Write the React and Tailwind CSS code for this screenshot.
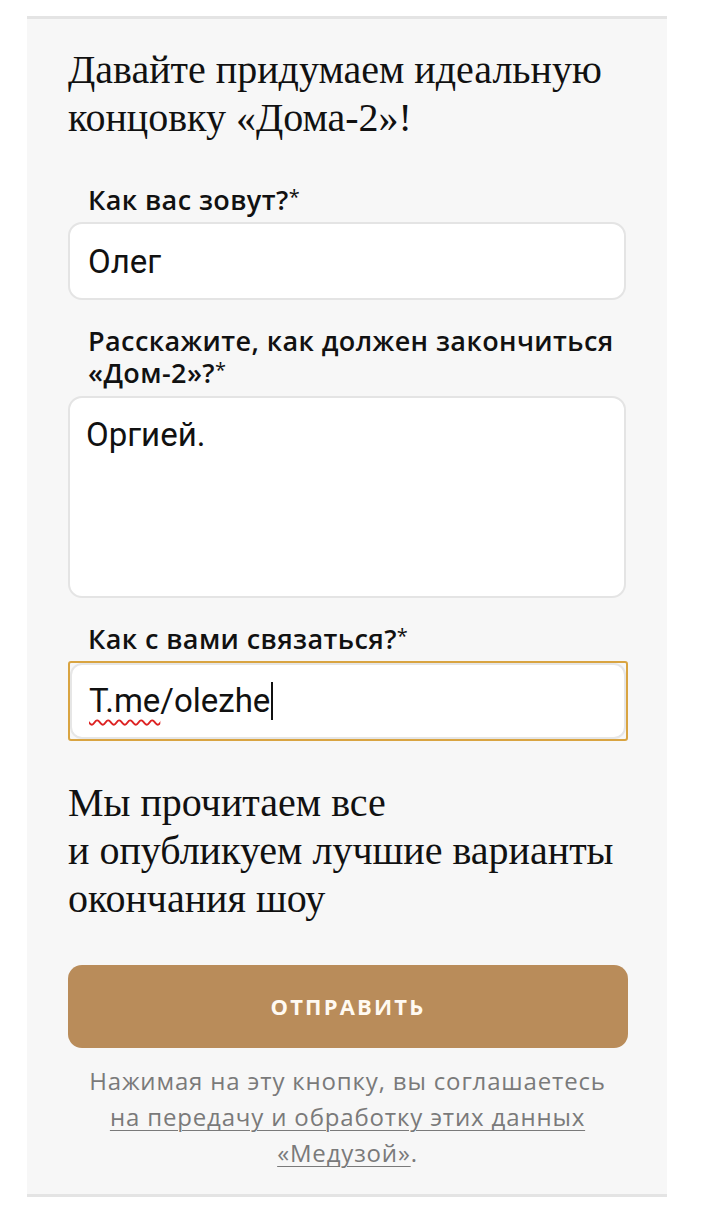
import { useState } from 'react';

const serif = { fontFamily: '"Liberation Serif", serif' };
const sans = { fontFamily: '"Open Sans", sans-serif' };

function Label({ children }) {
  return (
    <div className="pl-5 text-[27px] leading-[32px] font-semibold tracking-[0.015em] text-[#111]" style={sans}>
      {children}
      <span className="font-normal text-[20px] leading-[0] align-[6px]">*</span>
    </div>
  );
}

export default function App() {
  const [name, setName] = useState('Олег');
  const [ending, setEnding] = useState('Оргией.');

  return (
    <div className="bg-white min-h-[1205px] pt-[16px] pl-[27px] w-[704px]">
      <div className="w-[640px] bg-[#f7f7f7] border-t-[3px] border-b-[3px] border-[#e4e4e4] pl-[41px] pr-[40px] pt-[27px] pb-[23px]">
        <h1 className="text-[40px] leading-[48px] text-[#111]" style={serif}>
          Давайте придумаем идеальную концовку «Дома-2»!
        </h1>

        <div className="mt-[42px]" style={{ fontFamily: 'Roboto, sans-serif' }}>
          <Label>Как вас зовут?</Label>
          <input
            value={name}
            onChange={(e) => setName(e.target.value)}
            className="mt-[6px] block w-[558px] h-[78px] bg-white border-2 border-[#e4e4e4] rounded-[14px] px-[18px] text-[33px] text-[#111] outline-none"
          />

          <div className="mt-[25px]">
            <Label>Расскажите, как должен закончиться «Дом-2»?</Label>
          </div>
          <textarea
            value={ending}
            onChange={(e) => setEnding(e.target.value)}
            className="mt-[7px] block w-[558px] h-[202px] bg-white border-2 border-[#e4e4e4] rounded-[14px] px-[16px] pt-[12px] text-[33px] text-[#111] outline-none resize-none"
          />

          <div className="mt-[25px]">
            <Label>Как с вами связаться?</Label>
          </div>
          <div className="mt-[6px] w-[560px] h-[80px] border-2 border-[#d9a441] rounded-[3px]">
            <div className="h-full bg-white border-2 border-[#e6e6e6] rounded-[12px] px-[17px] flex items-center text-[33px] text-[#111]">
              <span className="underline decoration-wavy decoration-[#d22] decoration-[1.5px] underline-offset-[7px]">T.me</span>
              <span>/olezhe</span>
              <span className="w-[2px] h-[38px] bg-[#111] ml-[1px]" />
            </div>
          </div>
        </div>

        <p className="mt-[38px] text-[40px] leading-[48px] text-[#111]" style={serif}>
          Мы прочитаем все
          <br />
          и опубликуем лучшие варианты
          <br />
          окончания шоу
        </p>

        <button className="mt-[42px] block w-[560px] h-[83px] bg-[#b98c5a] rounded-[14px] text-[#fffaf2] text-[22px] font-bold tracking-[0.1em]" style={sans}>
          ОТПРАВИТЬ
        </button>

        <p className="mt-[15px] text-center text-[24px] leading-[36px] tracking-[0.035em] text-[#7a7a7a]" style={sans}>
          Нажимая на эту кнопку, вы соглашаетесь
          <br />
          <a href="#" className="underline underline-offset-4 decoration-1">
            на передачу и обработку этих данных
            <br />
            «Медузой»
          </a>
          .
        </p>
      </div>
    </div>
  );
}
